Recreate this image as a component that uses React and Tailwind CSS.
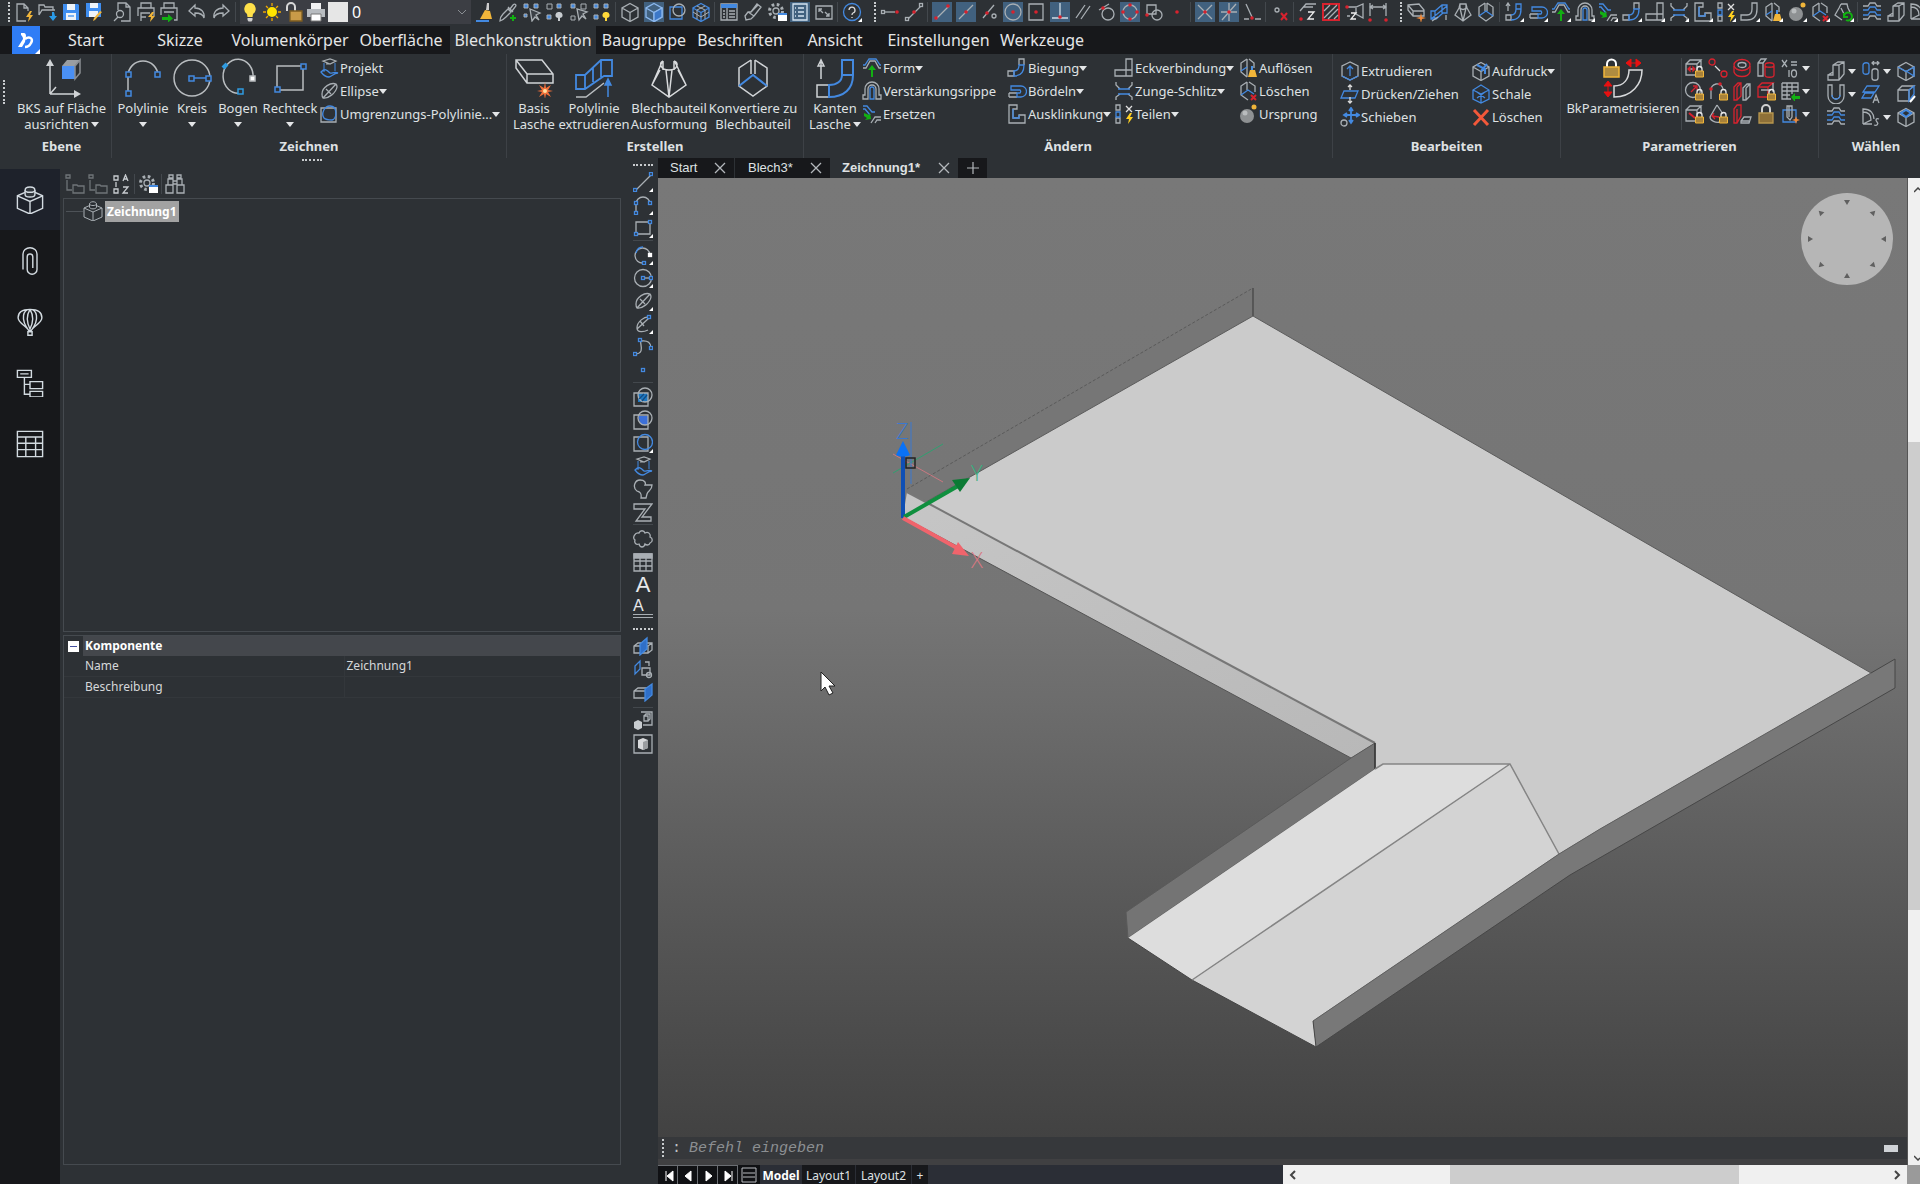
import { useState } from "react";
import clsx from "clsx";

const GREY = "#a9afb4";
const BLUE = "#4389e0";
const RED = "#d8222e";
const GOLD = "#f0b53a";
const GREEN = "#12b012";

// Short path helper, all icons are drawn on a 20x20 grid
const P = ({ d, c, f, w }) => <path d={d} stroke={c} fill={f} strokeWidth={w} />;
const Node = ({ x, y, c = BLUE, f = "#2d3135" }) => (
  <rect x={x - 1.5} y={y - 1.5} width="3" height="3" stroke={c} fill={f} />
);
const Dot = ({ x, y, r = 1.8, c = RED }) => <circle cx={x} cy={y} r={r} fill={c} stroke="none" />;
const Lock = () => (
  <>
    <P d="M13 13v-2a2.500 2.500 0 0 1 5 0v2" c="#e8e8e8" />
    <P d="M11.500 13h8v6h-8z" c={GOLD} f="#a8823a" w={1} />
  </>
);

const CUBE = "M10 1.500 18 6v9l-8 4.500L2 15V6zM2 6l8 4.500L18 6M10 10.500v9";

const icons = {
  new: (
    <>
      <P d="M14 9V6l-4-4H3v17h9M10 2v4h4" />
      <P d="m16 9-4 6h3l-1 5 5-7h-3l2-4z" f={GOLD} c="none" />
    </>
  ),
  open: (
    <>
      <P d="M2 13V3h5l1 2h8v3M2 13 5 8h13" />
      <P d="M15 10v4h-3l4 5 4-5h-2l-1-4z" f="#2a9be8" c="none" />
    </>
  ),
  save: (
    <>
      <P d="M2 2h15l1 1v15H2z" f="#3f8ef0" c="none" />
      <P d="M6 2h8v6H6zM5 11h10v7H5z" f="#eef3f8" c="none" />
      <P d="M7 14h6" c="#3f8ef0" />
    </>
  ),
  saveAs: (
    <>
      <P d="M2 1h15v14H2z" f="#3f8ef0" c="none" />
      <P d="M6 1h8v5H6zM5 9h9v6H5z" f="#eef3f8" c="none" />
      <P d="m18 10-7 8-2 1 1-3 6-7z" f={GOLD} c="none" />
    </>
  ),
  preview: (
    <>
      <P d="M6 8V1h8l4 4v14H9M14 1v4h4" />
      <circle cx="8" cy="12" r="3.500" />
      <P d="m6 15-4 4" />
    </>
  ),
  print: (
    <>
      <P d="M5 6V1h10v5M2 14V6h16v8M5 19v-8h9M5 15h5" />
      <P d="m16 10-4 5h3l-1 5 5-6h-3l2-4z" f={GOLD} c="none" />
    </>
  ),
  publish: (
    <>
      <P d="M5 6V1h10v5M2 13V6h16v12h-3M5 10h10" />
      <P d="M3 15h6v-3l5 4.500-5 4V18H3z" f={GREEN} c="none" />
    </>
  ),
  undo: <P d="m8 3-6 6 6 5v-3c5 0 8 1 9 5 1-6-3-10-9-10z" />,
  redo: <P d="m12 3 6 6-6 5v-3c-5 0-8 1-9 5C2 10 6 6 12 6z" />,
  bulb: (
    <>
      <P d="M10 1a6 6 0 0 0-3 11l.5 3h5l.5-3a6 6 0 0 0-3-11z" f="#ffe04a" c="none" />
      <P d="M7.500 16h5v2l-1 1.500h-3l-1-1.500z" f="#d0d0d0" c="none" />
    </>
  ),
  sun: (
    <>
      <circle cx="10" cy="10" r="5" fill="#ffe400" stroke="none" />
      <P d="M10 1v3M10 16v3M1 10h3M16 10h3M4 4l2 2M14 14l2 2M4 16l2-2M14 6l2-2" c="#f0a800" />
    </>
  ),
  unlock: (
    <>
      <P d="M3 9V5a4 4 0 0 1 8 0v5" c="#d8d8d8" w={2} />
      <P d="M6 9h12v10H6z" f="#c89a48" c="#7c5c20" />
    </>
  ),
  printer: (
    <>
      <P d="M5 1h10v6H5z" f="#f2f2f2" c="none" />
      <P d="M1 7h18v8H1z" f="#b8bcc0" c="none" />
      <P d="M5 12h10v7H5z" f="#fff" c="#777" w={1} />
    </>
  ),
  brush: (
    <>
      <P d="M12 1h2v7h-3z" f="#ccc" c="none" />
      <P d="m10 8 5 1 2 8H5z" f={GOLD} c="none" />
      <P d="M1 19h13" c={BLUE} w={2} />
    </>
  ),
  dropper: (
    <>
      <P d="M2 19c0-4 1-5 3-7l5-5 3 3-5 5c-2 2-3 3-6 4zM10 5l5 5M12 7l3-4c2-2 4 0 2 2l-3 4" />
      <P d="M15 13v6M12 16h6" c={GREEN} w={2} />
    </>
  ),
  grid1: (
    <>
      <P d="M2 2h4v4H2zM12 2h4v4h-4zM2 12h3v3H2z" f={BLUE} c={GREY} w={1} />
      <P d="m8 7 2 12 3-4 4 3-3-5 4-2z" f="#3b4046" />
    </>
  ),
  grid2: (
    <>
      <P d="M2 2h5v5H2z" w={1} />
      <P d="M12 2h4v4h-4zM2 13h4v4H2z" f={BLUE} c={GREY} w={1} />
      <P d="M14 10a3 3 0 0 0-1 6v3h2v-3a3 3 0 0 0-1-6z" f="#c8ccd0" c="none" />
    </>
  ),
  grid3: (
    <>
      <P d="M2 2h4v4H2z" f={BLUE} c={GREY} w={1} />
      <P d="M12 2h5v5h-5zM2 14h4v4H2z" w={1} />
      <P d="m8 7 2 11 3-4 4 3-3-5 4-2z" f="#3b4046" />
    </>
  ),
  grid4: (
    <>
      <P d="M2 2h4v4H2zM12 2h4v4h-4zM2 13h4v4H2z" f={BLUE} c={GREY} w={1} />
      <P d="M14 10a3 3 0 0 0-1 6v3h2v-3a3 3 0 0 0-1-6z" f="#ffd83a" c="none" />
    </>
  ),
  cube: <P d={CUBE} />,
  cubeBlue: (
    <>
      <P d={CUBE} c="#8cb8ee" />
      <P d="m10 10.500 8-4.500v9l-8 4.500z" f="#3c78c8" c="#8cb8ee" />
    </>
  ),
  cubeLines: (
    <>
      <P d={CUBE} c={BLUE} />
      <P d="m6 4 8 4v9M14 4 6 8v9M2 10l8 5 8-5" w={1} />
    </>
  ),
  boxes: (
    <>
      <P d="M3 5h12v12H3z" c={BLUE} />
      <circle cx="12" cy="8" r="6" />
    </>
  ),
  tableDoc: (
    <>
      <P d="M2 2h16v16H2zM8 6v12M10 9h6M10 12h6M10 15h6M4 9h2M4 12h2M4 15h2" />
      <P d="M2 2h16v4H2z" f={BLUE} c="none" />
    </>
  ),
  eraser: <P d="m2 14 3-4h3l6-8 4 3-7 9-3 3-5 1zM5 10l6 4M8 10l7-7" />,
  gear: (
    <>
      <circle cx="9" cy="9" r="3" />
      <circle cx="9" cy="9" r="6.500" strokeWidth="3" strokeDasharray="2.600 2.500" />
      <P d="M11 11h9v8h-9z" f="#fff" c="none" />
      <P d="M11 11h9v2h-9z" f={BLUE} c="none" />
    </>
  ),
  list: <P d="M3 2h14v16H3zM8 6h6M8 10h6M8 14h6M5 6h1M5 10h1M5 14h1" c="#d4e4f2" />,
  screen: <P d="M2 4h16v13H2zM5 10V7h3M5 7l4 4M15 11v3h-3M15 14l-4-4" />,
  help: (
    <>
      <circle cx="10" cy="10" r="8.500" stroke={BLUE} />
      <P d="M7 8a3 3 0 1 1 4 3c-1 .5-1 1-1 2M10 15v1" c="#dcdcdc" />
    </>
  ),
  snapEnd: (
    <>
      <P d="M4 10h11" />
      <Node x={3} y={10} c={GREY} />
      <Dot x={17} y={10} />
    </>
  ),
  snapLine: (
    <>
      <P d="M4 17 17 4" />
      <Node x={3} y={17} c={GREY} />
      <Node x={17} y={3} c={GREY} />
      <Dot x={10} y={10} />
    </>
  ),
  snapRed: (
    <>
      <P d="M4 17 17 4" />
      <Dot x={4} y={16} />
      <Dot x={16} y={4} />
    </>
  ),
  snapMid: (
    <>
      <P d="M3 17 17 3" />
      <Dot x={10} y={10} />
    </>
  ),
  snapNear: (
    <>
      <P d="M4 16 15 3" />
      <circle cx="15" cy="14" r="2" />
      <Dot x={8} y={11} />
    </>
  ),
  snapCenter: (
    <>
      <circle cx="10" cy="10" r="8" />
      <Dot x={10} y={10} />
    </>
  ),
  snapGeo: (
    <>
      <P d="M3 2h14v16H3z" />
      <Dot x={10} y={10} />
    </>
  ),
  snapPerp: (
    <>
      <P d="M10 1v14M2 16h16" c="#d0dce6" />
      <Dot x={10} y={15} />
    </>
  ),
  snapPar: <P d="M3 16 12 3M8 17l9-13" />,
  snapTan: (
    <>
      <circle cx="11" cy="12" r="6" />
      <P d="M2 8 12 2" />
      <Dot x={6} y={6} />
    </>
  ),
  snapQuad: (
    <>
      <circle cx="10" cy="10" r="7" />
      <Dot x={10} y={3} />
      <Dot x={10} y={17} />
      <Dot x={3} y={10} />
      <Dot x={17} y={10} />
    </>
  ),
  snapIns: (
    <>
      <P d="M3 3h9v9H3z" />
      <circle cx="13" cy="13" r="5" />
      <Dot x={3} y={13} />
    </>
  ),
  snapPoint: <Dot x={10} y={10} />,
  snapInt: (
    <>
      <P d="m3 3 14 14M17 3 3 17" />
      <Dot x={10} y={10} />
    </>
  ),
  snapInt2: (
    <>
      <P d="M10 1v18M17 2 3 18M2 10h16" />
      <Dot x={10} y={10} />
    </>
  ),
  snapExt: (
    <>
      <P d="m4 2 6 13" />
      <P d="M2 17h5M13 17h6" />
      <Dot x={10} y={16} />
    </>
  ),
  snapOff: (
    <>
      <circle cx="7" cy="8" r="2" />
      <P d="m11 11 6 7M17 11l-6 7" c={RED} w={2} />
    </>
  ),
  zLow: (
    <>
      <P d="m2 9 6-7h10M5 5h10" />
      <P d="M10 10h6l-6 7h6" c="#eee" />
      <Dot x={3} y={17} />
    </>
  ),
  hatchRed: (
    <>
      <P d="M2 2h16v16H2z" c={RED} w={2} />
      <P d="M3 9l6-6M3 16 16 3M7 17 17 7M13 17l4-4" />
    </>
  ),
  zNeg: (
    <>
      <P d="M2 5h9l7-3v14l-7-4V6M2 14h3" />
      <P d="M6 11h5l-5 6h5" c="#eee" />
      <Dot x={2} y={5} />
    </>
  ),
  dim: (
    <>
      <P d="M2 1v13M18 1v13M2 5h16M5 3 2 5l3 2M15 3l3 2-3 2" />
      <Dot x={2} y={18} />
      <Dot x={18} y={18} />
    </>
  ),
  base: (
    <>
      <P d="m2 3 11-1 5 6v6H7L2 8zM2 3l5 6h11M7 9v5" />
      <P d="m15 11 1 4 4 1-4 1-1 4-1-4-4-1 4-1z" f="#f08a3a" c="none" />
    </>
  ),
  extrude: (
    <>
      <P d="M2 9h4l7-6h5v8h-4l-7 6H2zM6 9v8M13 3v8M2 17 18 4" c={BLUE} />
      <P d="M3 19 9 15M17 18v-5" />
    </>
  ),
  lofted: <P d="M7 2h6l1 4 4 7-8 6-8-6 4-7zM7 2v4c2 2 4 2 6 0V2M7 6l3 13 3-13" />,
  convert: (
    <>
      <P d="M9 1 3 5v9l7 5 7-5V5l-6-4M9 1v8M11 1v8" />
      <P d="m3 14 7-5 7 5" c={BLUE} />
    </>
  ),
  flange: (
    <>
      <P d="M2 13h5v5H2zM4 9V2M2 4l2-3 2 3" />
      <P d="M12 2h5v5H12zM7 18c7 0 10-4 10-11M7 13c4 0 5-2 5-6" c={BLUE} />
    </>
  ),
  hem: (
    <>
      <P d="M2 16h8M2 12h8M2 12v4" />
      <P d="M4 5h10a5 5 0 0 1 0 11h-4v-4h3a2 2 0 0 0 0-3H4z" c={BLUE} />
    </>
  ),
  form: (
    <>
      <P d="M1 10h3l4-7h5l4 7h2" />
      <P d="M1 7h2l4-6h7l4 6h1" c={BLUE} />
      <P d="m10 7 4 5h-3v7H9v-7H6z" f={GREEN} c="none" />
    </>
  ),
  rib: (
    <>
      <P d="M1 18V14h2V8a7 7 0 0 1 14 0v6h2v4h-5V8a4 4 0 0 0-8 0v10z" />
      <P d="M8 18V8a2 2 0 0 1 4 0v10z" c={BLUE} />
    </>
  ),
  replace: (
    <>
      <P d="M1 2h4l5 6h3M1 5h2l5 6" c={BLUE} />
      <P d="M19 13h-6l-4 6M19 16h-4l-2 3" />
      <P d="m2 9 5 2 1-2 1 6-6 1 2-2-3-2z" f={GREEN} c="none" />
    </>
  ),
  bend: (
    <>
      <P d="M12 7V1h5v6M7 18H1v-5h6z" />
      <P d="M12 7h5c0 7-3 11-10 11v-5c4 0 5-3 5-6z" c={BLUE} />
    </>
  ),
  corner: <P d="M12 12V1h6v17H1v-6zM12 12v6M12 12h6" />,
  slot: (
    <>
      <P d="M2 1v3l4 4M18 1v3l-4 4M2 19v-3l4-3M18 19v-3l-4-3" />
      <P d="M4 8h12M4 13h12" c={BLUE} />
    </>
  ),
  notch: (
    <>
      <P d="M2 1h8v4H6v9h6v-3h6v8H2z" />
      <P d="M6 5v9h6v-3" c={BLUE} />
    </>
  ),
  split: (
    <>
      <P d="M2 1h4v5H2zM2 14h4v5H2z" />
      <P d="M2 8h4v5H2z" c={BLUE} />
      <P d="m12 2 6 6M18 2l-6 6" c="#e0e0e0" />
      <P d="m16 9-4 6h3l-1 5 5-7h-3l2-4z" f="#ffd020" c="none" />
    </>
  ),
  bendPlain: <P d="M12 7V1h5v6c0 7-3 11-10 11H1v-5h6c4 0 5-3 5-6z" />,
  dissolve: (
    <>
      <P d="M9 1 3 5v9l6 5M9 1v18M11 1l5 4v5" />
      <P d="m3 13 6-4" c={BLUE} />
      <P d="M13 8h2v4h-2z" f="#4a90e0" c="none" />
      <P d="m12 12 5 0 2 7h-9z" f={GOLD} c="none" />
    </>
  ),
  remove: (
    <>
      <P d="M9 1 3 5v9l7 5M11 1l6 4v6M9 1v8" />
      <P d="m3 14 7-5 6 4" c={BLUE} />
      <P d="m13 14 5 5M18 14l-5 5" c={RED} w={2} />
    </>
  ),
  origin: (
    <>
      <circle cx="9" cy="12" r="7" fill="#8e9193" stroke="none" />
      <circle cx="7" cy="9" r="2.500" fill="#b9bcbe" stroke="none" />
      <circle cx="16" cy="3" r="2.500" fill={GOLD} stroke="none" />
    </>
  ),
  refresh: (
    <>
      <P d="M7 2h6l1 4 2 4M7 2 5 6l-4 7 7 5M7 6l3 6" />
      <P d="M10 14a4 4 0 1 1 2 4M10 11v4h4" c={GREEN} w={2} />
    </>
  ),
  press: (
    <>
      <P d="M1 4h5l2-3h5l2 3h4M1 17h5l2-3h5l2 3h4" />
      <P d="M1 8h5l2-3h5l2 3h4M1 13h5l2-3h5l2 3h4" c={BLUE} />
    </>
  ),
  step: <P d="M2 14h5V4l5-3h6v12l-5 6H2zM7 4h6v15M13 4l5-3M2 14l5-3" />,
  project: (
    <>
      <P d="m4 3 7-2 6 2-6 3zM7 6h3" w={1.200} />
      <P d="M5 5v9M16 5v8" c={BLUE} w={1} />
      <P d="M2 14c3 4 5 5 8 5 2 0 5-4 9-4-4-2-6 1-8 0-3-3-5-5-9-1z" c={BLUE} />
    </>
  ),
  ellipse: (
    <>
      <P d="M17 3C12 1 3 6 3 13c0 2 0 3 1 4 5 1 13-5 14-11 0-1 0-2-1-3zM4 17 17 3M7 8l5 5" />
    </>
  ),
  ellArc: (
    <>
      <P d="M17 3C11 2 4 8 4 14c0 5 7 4 11 2M4 15 16 4M7 7l4 5" />
      <Node x={16} y={3} />
    </>
  ),
  boundary: (
    <>
      <P d="M2 4h15v14H2z" />
      <P d="M5 14c-3-4 0-12 6-12 8 0 7 13 2 14-3 0-6 0-8-2z" c={BLUE} />
    </>
  ),
  extrudeBox: (
    <>
      <P d="M10 1 2 5v10l8 4 8-4V5z" />
      <P d="M2 15l8 4 8-4M10 15V6M7 8l3-3 3 3" c={BLUE} />
    </>
  ),
  pushPull: (
    <>
      <P d="M4 7h14l-3 7H1z" c={BLUE} />
      <P d="M10 1v5M10 13v6M8 3l2-2 2 2M8 17l2 2 2-2" c="#ddd" />
    </>
  ),
  move: (
    <>
      <P d="M11 2v13M5 8h13M9 4l2-3 2 3M9 13l2 3 2-3M7 6 4 8l3 2M16 6l3 2-3 2" c={BLUE} w={1.800} />
      <circle cx="4" cy="16" r="3" />
    </>
  ),
  imprint: (
    <>
      <P d={CUBE} />
      <P d="m6 4 8 4v5M10 10l6-7" c={BLUE} w={2} />
    </>
  ),
  shell: <P d="M10 1 18 6v9l-8 4-8-4V6zM2 6l8 4 8-4M10 10v9M6 8l8 6M14 8l-8 6" c={BLUE} />,
  cross: <P d="m3 3 14 15M17 3 3 18" c="#f2583a" w={3} />,
  lockBox: (
    <>
      <P d="M2 6h11v11H2zM2 6l4-4h11l-4 4M17 2v8M4 11h7" />
      <P d="m4 11 2-2v4zM11 11 9 9v4z" f={RED} c={RED} />
      <Lock />
    </>
  ),
  lockRadius: (
    <>
      <circle cx="9" cy="9" r="7.500" />
      <P d="m7 11 5-5M9 5h4v4" c={RED} />
      <Lock />
    </>
  ),
  lockBox2: (
    <>
      <P d="M2 6h11v11H2zM2 6l4-4h11l-4 4M17 2v8" />
      <P d="m5 9 6 5" c={RED} w={2} />
      <Lock />
    </>
  ),
  coincident: (
    <>
      <circle cx="4" cy="4" r="3" stroke={RED} />
      <circle cx="16" cy="16" r="3" stroke={RED} />
      <P d="m7 8 5 5" c="#ddd" />
    </>
  ),
  lockArc: (
    <>
      <P d="M3 18V10a6 6 0 0 1 12-2" />
      <Dot x={3} y={8} />
      <Dot x={12} y={3} />
      <Lock />
    </>
  ),
  lockCone: (
    <>
      <P d="M9 1 2 13c0 4 6 6 10 5M9 1l6 9" />
      <P d="m4 12 7 1M6 9l-2 3 3 3" c={RED} />
      <Lock />
    </>
  ),
  torus: (
    <>
      <ellipse cx="10" cy="7" rx="8" ry="5.500" stroke={RED} />
      <ellipse cx="10" cy="7" rx="4" ry="2.500" />
      <P d="M2 8v6c2 6 14 6 16 0V8" c={RED} />
    </>
  ),
  parallelRed: (
    <>
      <P d="M2 6l4-4h3v13l-4 4H2zM5 6l4-4M5 6v13" c={RED} />
      <P d="M11 7l4-4h3v12l-4 4h-3zM14 7l4-4M14 7v12" />
    </>
  ),
  perpRed: (
    <>
      <P d="M2 5l3-4h4v11l-4 7H2zM5 5v14" c={RED} />
      <P d="m9 17 3-4h7l-2 6H9zM9 17h8" />
    </>
  ),
  cylinder: (
    <>
      <P d="M2 18V5l3-4h5L7 5v13zM2 5h5" />
      <P d="M9 7c0-3 9-3 9 0v10c0 3-9 3-9 0zM9 7c0 3 9 3 9 0" c={RED} />
    </>
  ),
  lockFace: (
    <>
      <P d="M2 6h10v10H2zM2 6l4-4h11l-5 4" c={RED} />
      <P d="M5 9h10M17 2v9" />
      <Lock />
    </>
  ),
  lockBig: (
    <>
      <P d="M6 9V5a4 4 0 0 1 8 0v4" c="#d0d0d0" w={2} />
      <P d="M3 9h14v10H3z" c="#b8964e" f="#8e7038" />
    </>
  ),
  params: (
    <>
      <P d="m2 2 5 7M7 2 2 9M11 4h6M11 7h6M9 12v7" />
      <ellipse cx="14" cy="15.500" rx="2.500" ry="3.500" />
    </>
  ),
  tableArrow: (
    <>
      <P d="M2 2h16v9M2 2v16h9M2 6h16M2 10h16M2 14h8M7 2v16M12 2v11" />
      <P d="m11 16 4-4v3h5v3h-5v3z" f={GREEN} c="none" />
    </>
  ),
  array: (
    <>
      <P d="M3 6h13v12H3z" c={BLUE} />
      <P d="M7 2h5v11l-2 3-3-3zM9 2v11" />
      <P d="m16 12 1 3 3 1-3 1-1 3-1-3-3-1 3-1z" f="#f08a3a" c="none" />
    </>
  ),
  cylinders: (
    <>
      <P d="M2 4c0-3 6-3 6 0v7c0 3-6 3-6 0z" c={BLUE} />
      <P d="M11 10c0-3 6-3 6 0v7c0 3-6 3-6 0zM11 2h7M13 0l-2 2 2 2M16 0l2 2-2 2" />
    </>
  ),
  cubeSel: (
    <>
      <P d={CUBE} />
      <P d="m2 6 8 4.500 8-4.500v9L10 10" c={BLUE} />
    </>
  ),
  uShape: (
    <>
      <P d="M2 1h4v10a4 4 0 0 0 8 0V1h4v11a7 7 0 0 1-16 0z" />
      <P d="M6 11a4 4 0 0 0 8 0" c={BLUE} />
    </>
  ),
  planeA: (
    <>
      <P d="M6 2h12l-4 6H2zM4 9h9l-3 5H1z" c={BLUE} />
      <P d="m12 19 3-8 3 8M13 16h4" />
    </>
  ),
  boxArrow: (
    <>
      <P d="M2 6h11v11H2zM2 6l4-4h12l-5 4" />
      <P d="M18 2v8l-5 7V6z" c={BLUE} />
      <P d="m14 18 5-6" c="#fff" w={2} />
    </>
  ),
  quarter: (
    <>
      <P d="M2 17V2c8 0 11 5 11 10M2 17h9M2 5c5 0 8 3 8 8l-8 4" />
      <P d="M18 12c-3-1-4 1-2 3s0 4-3 3" />
    </>
  ),
  cubeTop: (
    <>
      <P d={CUBE} />
      <P d="m5 6 5-3 5 3-5 4z" c={BLUE} w={2} />
    </>
  ),
  line: (
    <>
      <P d="M3 18 18 3" />
      <Node x={2} y={18} />
      <Node x={18} y={2} />
    </>
  ),
  polyline: (
    <>
      <P d="M3 18V9a7 7 0 0 1 14 0" />
      <Node x={3} y={18} />
      <Node x={3} y={8} />
      <Node x={17} y={8} />
    </>
  ),
  rect: (
    <>
      <P d="M3 4h14v12H3z" />
      <Node x={3} y={16} />
      <Node x={17} y={4} />
    </>
  ),
  arc: (
    <>
      <P d="M17 10A7.500 7.500 0 1 0 10 18" />
      <P d="M3 8c1-4 4-6 7-6" c={BLUE} />
      <Node x={17} y={10} c="#fff" f="#fff" />
      <Node x={11} y={18} />
    </>
  ),
  circle: (
    <>
      <circle cx="10" cy="10" r="8.500" />
      <P d="M10 10h8" />
      <Node x={10} y={10} />
      <Node x={18} y={10} />
    </>
  ),
  spline: (
    <>
      <P d="M2 17c11 0 4-12 6-13 7-1 10 2 10 7" />
      <Node x={2} y={17} />
      <Node x={7} y={3} />
      <Node x={18} y={11} />
    </>
  ),
  point: <Node x={10} y={10} />,
  hatch: (
    <>
      <P d="M5 6h10v9H5z" f="#1f78c0" c="none" />
      <P d="M1 6h14v13H1z" />
      <circle cx="12" cy="8" r="7" />
      <P d="m6 12 5-5M9 14l5-6" c="#124a80" />
    </>
  ),
  gradient: (
    <>
      <P d="M5 6h10v9H8z" f="#3c70d8" c="none" />
      <P d="M1 5h14v14H1z" />
      <circle cx="12" cy="8" r="7" />
    </>
  ),
  region: (
    <>
      <P d="M1 4h14v14H1z" />
      <circle cx="12" cy="9" r="7.500" stroke={BLUE} />
    </>
  ),
  blob: <P d="M7 1c5 0 6 3 5 5h7c0 6-4 5-5 9l-1 4H8c1-6-2-6-4-7-5-4-2-11 3-11z" />,
  zShape: <P d="M1 2h18L9 15h9v4H3L12 7H1z" />,
  cloud: <P d="M6 4c1-3 5-3 6 0 3-2 6 1 5 4 3 1 3 5 0 6-1 3-4 2-5 1-1 4-5 4-6 0-3 1-5-1-4-4-3-2 0-8 4-7z" />,
  table: (
    <>
      <P d="M1 2h18v17H1zM1 9h18M1 14h18M7 5v14M13 5v14" />
      <P d="M1 2h18v4H1z" f={GREY} />
    </>
  ),
  section: (
    <>
      <P d="M1 10l4-3h14v7l-4 3H1zM1 10h14v7M15 10l4-3" />
      <P d="m7 8 7-6v11l-7 6z" f="#2f6fc8" c={BLUE} />
    </>
  ),
  sectionLive: (
    <>
      <P d="m2 7 5-5v8l-5 5z" c={BLUE} />
      <P d="M9 9h8v7H9zM12 3h4v4" />
      <circle cx="16" cy="16" r="2.500" />
    </>
  ),
  sectionEnd: (
    <>
      <P d="M1 9l4-3h13v7l-4 3H1zM1 9h13v7" />
      <P d="m12 7 7-5v11l-7 6z" f="#2f6fc8" c={BLUE} />
    </>
  ),
  viewOut: (
    <>
      <P d="M8 1h11v13H10M11 5h4v5h-4zM11 5l2-2h4v5l-2 2" />
      <P d="m5 9 4 2v6l-4 2-4-2v-6z" f="#c8ccd0" c="none" />
    </>
  ),
  viewCube: (
    <>
      <P d="M1 1h18v18H1z" />
      <P d="m10 4 5 2v8l-5 2-5-2V6z" f="#d8dadc" c="none" />
      <P d="m10 8 5-2v8l-5 2z" f="#9a9da0" c="none" />
    </>
  ),
  folderTree: <P d="M1 1h4v3H1zM2 6v10h5M8 11h4l1 1h6v7H8z" c="#6f7478" />,
  sortAz: (
    <>
      <P d="M3 2h4v4H3zM3 15h4v4H3zM5 8v5" c="#c8ccd0" />
      <P d="m12 7 2.500-6L17 7M13 5h3M12 13h5l-5 6h5" c="#c8ccd0" />
    </>
  ),
  binoculars: <P d="M4 1h4v3H4zM12 1h4v3h-4zM3 5h5v6H3zM12 5h5v6h-5zM1 11h7v8H1zM12 11h7v8h-7zM8 7h4v3H8z" />,
  part: (
    <>
      <P d="m10 3 9 4v9l-9 4-9-4V7zM1 7l9 4 9-4M10 11v9" />
      <P d="M6.500 3c0-3 7-3 7 0v3c0 2.500-7 2.500-7 0z" f="#272b30" />
      <P d="M6.500 3c0 2 7 2 7 0" />
    </>
  ),
  clip: <P d="M5 16V5a5 4.500 0 0 1 10 0v11a3.500 3.500 0 0 1-7 0V7a2 2 0 0 1 4 0v8" />,
  balloon: <P d="M10 1c-5 0-8.500 2-8.500 6S8 13 9 16h2c1-3 7.500-5 7.500-9S15 1 10 1zM9 16C3 8 5 1 10 1s7 7 1 15M10 1c-3 5-2 10 0 14 2-4 3-9 0-14M8.500 17h3v2.500h-3z" />,
  hierarchy: <P d="M1 1h10v5H1zM3 3.500h6M6 6v12h4M6 11h4M10 9h9v5h-9zM10 16h9v4h-9z" />,
  grid: <P d="M1 1h18v18H1zM1 5h18M1 9.500h18M1 14h18M7 5v14M14 5v14" />,
};

function Icon({ name, fly, className = "size-5" }) {
  return (
    <svg
      viewBox="0 0 20 20"
      className={clsx("shrink-0", className)}
      fill="none"
      stroke={GREY}
      strokeWidth="1.300"
      aria-hidden="true"
    >
      {icons[name]}
      {fly && <P d="M20 16v4h-4z" f="#fff" c="none" />}
    </svg>
  );
}

function Caret() {
  return (
    <svg viewBox="0 0 8 5" className="h-[5px] w-2 shrink-0" aria-hidden="true">
      <path d="M0 0h8L4 5z" fill="#e4e6e8" />
    </svg>
  );
}

// Drag handle made of small dots
function Grip({ vertical, className }) {
  return (
    <div
      className={clsx(
        "shrink-0 border-dotted border-[#c8cbce]",
        vertical ? "border-l-2" : "border-t-2",
        className,
      )}
    />
  );
}

function Sep({ className }) {
  return <div className={clsx("w-px shrink-0 bg-[#43484d]", className)} />;
}

const toolbarLeft = [
  { cls: "ml-1 w-[90px]", items: ["new", "open", "save", "saveAs"] },
  { cls: "ml-2 w-[67px]", items: ["preview", "print", "publish"] },
  { cls: "ml-2 w-11", items: ["undo", "redo"] },
];

const toolbarRight = [
  { cls: "ml-1 w-[137px]", items: ["brush", "dropper", "grid1", "grid2", "grid3", "grid4"] },
  { sep: true },
  { cls: "ml-1 w-[91px]", items: ["cube", "cubeBlue", "boxes", "cubeLines"], on: [1] },
  { sep: true },
  { cls: "ml-1 w-[115px]", items: ["tableDoc", "eraser", "gear", "list", "screen"], on: [3] },
  { sep: true },
  { cls: "ml-1 w-5", items: ["help"], fly: true },
  { grip: true },
  { cls: "ml-1 w-11", items: ["snapEnd", "snapLine"] },
  { sep: true },
  {
    cls: "ml-1 w-[255px]",
    items: [
      "snapRed", "snapMid", "snapNear", "snapCenter", "snapGeo", "snapPerp",
      "snapPar", "snapTan", "snapQuad", "snapIns", "snapPoint",
    ],
    on: [0, 1, 3, 5, 8],
  },
  { sep: true },
  { cls: "ml-1 w-[67px]", items: ["snapInt", "snapInt2", "snapExt"], on: [0, 1] },
  { sep: true },
  { cls: "ml-1 w-5", items: ["snapOff"] },
  { sep: true },
  { cls: "ml-1 w-[90px]", items: ["zLow", "hatchRed", "zNeg", "dim"] },
  { grip: true },
  { cls: "ml-1 w-[90px]", items: ["base", "extrude", "lofted", "convert"] },
  { sep: true },
  {
    cls: "ml-1 w-[350px]",
    items: [
      "flange", "hem", "form", "rib", "replace", "bend", "corner", "slot",
      "notch", "split", "bendPlain", "dissolve", "origin", "remove", "refresh",
    ],
    fly: true,
  },
  { sep: true },
  { cls: "ml-1 w-[67px]", items: ["press", "step", "quarter"] },
];

function ToolGroup({ group }) {
  if (group.sep) return <Sep className="ml-[3px] h-5" />;
  if (group.grip) return <Grip vertical className="ml-3 h-5" />;
  return (
    <div className={clsx("flex shrink-0 justify-between", group.cls)}>
      {group.items.map((name, i) => (
        <button
          key={name}
          type="button"
          aria-label={name}
          className={clsx(group.on?.includes(i) && "bg-[#41617f]")}
        >
          <Icon name={name} fly={group.fly} />
        </button>
      ))}
    </div>
  );
}

function QuickToolbar() {
  return (
    <div className="flex h-[26px] shrink-0 items-center overflow-hidden bg-[#2d3135] pb-0.5 pl-2">
      <Grip vertical className="h-5" />
      {toolbarLeft.map((g, i) => (
        <ToolGroup key={i} group={g} />
      ))}
      <Sep className="mx-1 h-5" />
      <div className="flex h-6 w-[231px] shrink-0 items-center gap-0.5 bg-[#3c3e44] pr-1">
        <Icon name="bulb" />
        <Icon name="sun" />
        <Icon name="unlock" />
        <Icon name="printer" />
        <div className="size-5 shrink-0 bg-[#e6e6e6]" />
        <select
          aria-label="Layer"
          className="min-w-0 flex-1 appearance-none bg-transparent pl-0.5 text-base text-white"
        >
          <option>0</option>
        </select>
        <svg viewBox="0 0 10 6" className="w-[10px]" fill="none" stroke="#8a8e93" aria-hidden="true">
          <path d="m1 1 4 4 4-4" />
        </svg>
      </div>
      {toolbarRight.map((g, i) => (
        <ToolGroup key={i} group={g} />
      ))}
    </div>
  );
}

const menus = [
  { label: "Start", cls: "w-[92px]" },
  { label: "Skizze", cls: "w-24" },
  { label: "Volumenkörper", cls: "w-[124px]" },
  { label: "Oberfläche", cls: "w-[98px]" },
  { label: "Blechkonstruktion", cls: "w-[146px]" },
  { label: "Baugruppe", cls: "w-24" },
  { label: "Beschriften", cls: "w-24" },
  { label: "Ansicht", cls: "w-[94px]" },
  { label: "Einstellungen", cls: "w-[113px]" },
  { label: "Werkzeuge", cls: "w-[94px]" },
];

function MenuBar() {
  const [active, setActive] = useState("Blechkonstruktion");
  return (
    <div className="flex h-7 shrink-0 bg-[#17181b] pl-3">
      <svg viewBox="0 0 28 28" className="size-7 shrink-0 bg-[#2f7df6]" role="img" aria-label="BricsCAD">
        <path d="M9 7h3c1 0 2 1 2 3l-1 6-3 5H6l5-8c0-2-1-3-2-4z" fill="#fff" />
        <path d="M13 13c4-3 9-1 6 4-1 2-3 4-6 4" fill="none" stroke="#fff" strokeWidth="2.500" />
        <path d="M28 23v5h-5z" fill="#fff" />
      </svg>
      {menus.map((m) => (
        <button
          key={m.label}
          type="button"
          onClick={() => setActive(m.label)}
          className={clsx(
            "shrink-0 text-center text-base whitespace-nowrap text-[#e4e5e6]",
            m.cls,
            active === m.label && "bg-[#2d3135]",
          )}
        >
          {m.label}
        </button>
      ))}
    </div>
  );
}

// Large ribbon drawings, 40x40 grid
const big = {
  ucs: (
    <>
      <path d="M8 36V6M8 36h26M8 36l6-7" stroke="#d0d3d6" />
      <path d="m4 8 4-7 4 7zM32 32l7 4-7 4z" fill="#d0d3d6" stroke="none" />
      <path d="M20 8h13v13H20z" fill="#4a90f5" stroke="none" />
      <path d="m20 8 5-6h13l-5 6z" fill="#9a9ea2" stroke="none" />
      <path d="M33 8l5-6v13l-5 6z" stroke="#8a8e92" />
    </>
  ),
  polyline: (
    <>
      <path d="M5 36V18a15 15 0 0 1 30 0" />
      <path d="M3 33h5v5H3zM3 14h5v5H3zM32 14h5v5h-5z" stroke={BLUE} fill="#2d3135" />
    </>
  ),
  circle: (
    <>
      <circle cx="20" cy="20" r="18" />
      <path d="M20 20h17" stroke={BLUE} />
      <path d="M17 18h5v5h-5zM34 18h5v5h-5z" stroke={BLUE} fill="#2d3135" />
    </>
  ),
  arc: (
    <>
      <path d="M35 20A15 17 0 1 0 22 35" />
      <path d="M5 10 9 6" stroke="#2f9be0" strokeWidth="4" />
      <path d="M32 18h5v5h-5z" fill="#fff" />
      <path d="M20 31h5v5h-5z" stroke="#2f9be0" fill="#2d3135" />
    </>
  ),
  rect: (
    <>
      <path d="M7 8h26v24H7z" />
      <path d="M31 6h5v5h-5zM5 29h5v5H5z" stroke={BLUE} fill="#2d3135" />
    </>
  ),
  base: (
    <>
      <path d="M2 2h26l11 14v9H13L2 10zM2 2l11 14h26M13 16v9" stroke="#d0d3d6" />
      <path
        d="m31 24 1 6 5-3-3 5 5 1-5 1 3 5-5-3-1 5-1-5-5 3 3-5-5-1 5-1-3-5 5 3z"
        fill="#f2703a"
        stroke="none"
      />
      <circle cx="31" cy="33" r="2" fill="#ffe0a0" stroke="none" />
    </>
  ),
  extrude: (
    <>
      <path d="M2 17h9l16-15h11v16h-8L11 31H2zM11 17v14M19 10v14M27 2v17" stroke={BLUE} strokeWidth="1.800" />
      <path d="M2 39h10l18-14" />
      <path d="M34 39V22M31 27l3-6 3 6z" stroke={BLUE} fill={BLUE} />
    </>
  ),
  lofted: (
    <path d="M14 3c-4 2-3 9 6 9s10-7 5-9M14 3v9M25 3v9M13 4 3 27l17 12 17-12L26 4M17 12l3 27 3-27M3 27l8-15M37 27 29 12" stroke="#d8dadc" />
  ),
  convert: (
    <>
      <path d="M18 2 6 10v18l14 10 14-10V10L22 2M18 2v14M22 2v14" stroke="#d0d3d6" />
      <path d="m6 28 14-11 14 11" stroke={BLUE} strokeWidth="2" />
    </>
  ),
  flange: (
    <>
      <path d="M2 27h12v12H2zM6 21V4M3 8l3-6 3 6z" stroke="#d0d3d6" />
      <path d="M27 2h11v15c0 14-9 22-24 22V27c8 0 13-4 13-10zM27 17h11" stroke={BLUE} strokeWidth="2" />
    </>
  ),
  param: (
    <>
      <path d="M4 10V6a4 4 0 0 1 9 0v4" stroke="#fff" strokeWidth="2" />
      <path d="M1 9h15v10H1z" fill="#b08c40" stroke={GOLD} />
      <path d="M26 12h13c0 14-10 27-28 27V28c10 0 15-7 15-16z" stroke="#d8dadc" />
      <path
        d="M24 5h12M28 1l-5 4 5 4zM33 1l5 4-5 4zM5 26v10M1 28l4-5 4 5zM1 34l4 5 4-5z"
        fill="#e81010"
        stroke="#e81010"
        strokeWidth="1"
      />
    </>
  ),
};

function BigButton({ icon, lines, drop, className }) {
  return (
    <button
      type="button"
      className={clsx("flex shrink-0 flex-col items-center pt-1 text-[13px] leading-4", className)}
    >
      <svg
        viewBox="0 0 40 40"
        className="mb-0.5 size-10 shrink-0"
        fill="none"
        stroke="#b9bdc0"
        strokeWidth="1.500"
        aria-hidden="true"
      >
        {big[icon]}
      </svg>
      <span className="whitespace-nowrap">{lines[0]}</span>
      <span className="flex h-4 items-center gap-0.5 whitespace-nowrap">
        {lines[1]}
        {drop && <Caret />}
      </span>
    </button>
  );
}

function SmallColumn({ items, className }) {
  return (
    <div className={clsx("flex shrink-0 flex-col gap-[3px]", className)}>
      {items.map(([icon, label, drop]) => (
        <button
          key={label}
          type="button"
          className="flex h-5 items-center text-[13px] leading-5 whitespace-nowrap"
        >
          <Icon name={icon} className="mr-px size-5" />
          {label}
          {drop && <Caret />}
        </button>
      ))}
    </div>
  );
}

function IconColumn({ items, drop = [], className }) {
  return (
    <div className={clsx("flex shrink-0 flex-col gap-[3px]", className)}>
      {items.map((name, i) => (
        <button key={name} type="button" aria-label={name} className="flex h-5 items-center gap-0.5">
          <Icon name={name} />
          {drop.includes(i) && <Caret />}
        </button>
      ))}
    </div>
  );
}

function RibbonGroup({ label, className, children }) {
  return (
    <section
      className={clsx("flex shrink-0 flex-col border-r border-[#3d4146]", className)}
      aria-label={label}
    >
      <div className="flex h-[83px]">{children}</div>
      <h2 className="text-center text-[13px] leading-[18px] font-bold">{label}</h2>
    </section>
  );
}

function Ribbon() {
  return (
    <div className="flex h-[104px] shrink-0 overflow-hidden text-[#dfe1e3]">
      <Grip vertical className="mt-[26px] ml-[3px] h-6 w-[9px]" />
      <RibbonGroup label="Ebene" className="w-[100px]">
        <BigButton icon="ucs" lines={["BKS auf Fläche", "ausrichten"]} drop className="w-full" />
      </RibbonGroup>
      <RibbonGroup label="Zeichnen" className="w-[395px]">
        <BigButton icon="polyline" lines={["Polylinie"]} drop className="ml-[5px] w-[52px]" />
        <BigButton icon="circle" lines={["Kreis"]} drop className="w-[46px]" />
        <BigButton icon="arc" lines={["Bogen"]} drop className="w-[46px]" />
        <BigButton icon="rect" lines={["Rechteck"]} drop className="w-[58px]" />
        <SmallColumn
          className="pt-1"
          items={[
            ["project", "Projekt"],
            ["ellipse", "Ellipse", true],
            ["boundary", "Umgrenzungs-Polylinie...", true],
          ]}
        />
      </RibbonGroup>
      <RibbonGroup label="Erstellen" className="w-[297px]">
        <BigButton icon="base" lines={["Basis", "Lasche"]} className="ml-1 w-[46px]" />
        <BigButton icon="extrude" lines={["Polylinie", "extrudieren"]} className="w-[74px]" />
        <BigButton icon="lofted" lines={["Blechbauteil", "Ausformung"]} className="w-[76px]" />
        <BigButton icon="convert" lines={["Konvertiere zu", "Blechbauteil"]} className="w-[92px]" />
      </RibbonGroup>
      <RibbonGroup label="Ändern" className="w-[529px]">
        <BigButton icon="flange" lines={["Kanten", "Lasche"]} drop className="ml-1 w-[54px]" />
        <SmallColumn
          className="w-[145px] pt-1"
          items={[
            ["form", "Form", true],
            ["rib", "Verstärkungsrippe"],
            ["replace", "Ersetzen"],
          ]}
        />
        <SmallColumn
          className="w-[107px] pt-1"
          items={[
            ["bend", "Biegung", true],
            ["hem", "Bördeln", true],
            ["notch", "Ausklinkung", true],
          ]}
        />
        <SmallColumn
          className="w-[124px] pt-1"
          items={[
            ["corner", "Eckverbindung", true],
            ["slot", "Zunge-Schlitz", true],
            ["split", "Teilen", true],
          ]}
        />
        <SmallColumn
          className="pt-1"
          items={[
            ["dissolve", "Auflösen"],
            ["remove", "Löschen"],
            ["origin", "Ursprung"],
          ]}
        />
      </RibbonGroup>
      <RibbonGroup label="Bearbeiten" className="w-[228px]">
        <SmallColumn
          className="ml-[7px] w-[131px] pt-[7px]"
          items={[
            ["extrudeBox", "Extrudieren"],
            ["pushPull", "Drücken/Ziehen"],
            ["move", "Schieben"],
          ]}
        />
        <SmallColumn
          className="pt-[7px]"
          items={[
            ["imprint", "Aufdruck", true],
            ["shell", "Schale"],
            ["cross", "Löschen"],
          ]}
        />
      </RibbonGroup>
      <RibbonGroup label="Parametrieren" className="w-[258px]">
        <BigButton icon="param" lines={["BkParametrisieren"]} className="w-[120px] pl-1" />
        <Sep className="mt-1 mr-[2px] h-[72px]" />
        <div className="flex gap-1 pt-1">
          <IconColumn items={["lockBox", "lockRadius", "lockBox2"]} />
          <IconColumn items={["coincident", "lockArc", "lockCone"]} />
          <IconColumn items={["torus", "parallelRed", "perpRed"]} />
          <IconColumn items={["cylinder", "lockFace", "lockBig"]} />
          <IconColumn items={["params", "tableArrow", "array"]} drop={[0, 1, 2]} />
        </div>
      </RibbonGroup>
      <RibbonGroup label="Wählen" className="w-[115px]">
        <IconColumn className="ml-[7px] w-[35px] pt-[7px]" items={["step", "uShape", "press"]} drop={[0, 1]} />
        <IconColumn className="w-[35px] pt-[7px]" items={["cylinders", "planeA", "quarter"]} drop={[0, 2]} />
        <IconColumn className="pt-[7px]" items={["cubeSel", "boxArrow", "cubeTop"]} />
      </RibbonGroup>
    </div>
  );
}

const panels = ["part", "clip", "balloon", "hierarchy", "grid"];

function SideBar() {
  return (
    <nav className="flex w-[60px] shrink-0 flex-col bg-[#17181b]">
      {panels.map((name, i) => (
        <button
          key={name}
          type="button"
          aria-label={name}
          className={clsx("flex h-[61px] items-center justify-center", i === 0 && "bg-[#1e222b]")}
        >
          <Icon name={name} className="size-7 brightness-125 [stroke-width:1]" />
        </button>
      ))}
    </nav>
  );
}

function StructurePanel() {
  return (
    <aside className="flex min-h-0 w-[563px] shrink-0 flex-col pr-0.5 pb-[19px] pl-[3px]">
      <div className="flex h-[29px] shrink-0 items-center gap-[3px] pl-0.5">
        <button type="button" aria-label="Aufklappen">
          <Icon name="folderTree" />
        </button>
        <button type="button" aria-label="Zuklappen">
          <Icon name="folderTree" />
        </button>
        <button type="button" aria-label="Sortieren">
          <Icon name="sortAz" />
        </button>
        <Sep className="h-5" />
        <button type="button" aria-label="Optionen">
          <Icon name="gear" />
        </button>
        <Sep className="h-5" />
        <button type="button" aria-label="Suchen">
          <Icon name="binoculars" />
        </button>
      </div>
      <div className="h-[434px] shrink-0 border border-[#454a4f] pt-px text-xs">
        <div className="flex h-[22px] items-center">
          <div className="ml-0.5 w-[17px] border-t border-[#4d5257]" />
          <Icon name="part" className="mr-0.5 size-5 [stroke-width:1]" />
          <span className="bg-[#a2a2a2] px-0.5 leading-[21px] font-bold text-white">Zeichnung1</span>
        </div>
      </div>
      <div className="mt-[3px] min-h-0 flex-1 border border-[#454a4f]">
        <table className="w-full table-fixed border-collapse text-left text-xs leading-5 text-[#d6d8da]">
          <colgroup>
            <col className="w-[19px]" />
            <col className="w-[261px]" />
            <col />
          </colgroup>
          <tbody>
            <tr>
              <td className="pl-1">
                <button
                  type="button"
                  aria-label="Gruppe schließen"
                  className="flex size-[11px] items-center justify-center bg-white"
                >
                  <span className="h-px w-[7px] bg-[#4450a0]" />
                </button>
              </td>
              <th colSpan={2} className="bg-[#44474c] pl-[2px] font-bold text-white">
                Komponente
              </th>
            </tr>
            <tr className="border-b border-[#33373b]">
              <td />
              <th scope="row" className="border-r border-[#33373b] pl-[2px] font-normal">
                Name
              </th>
              <td className="pl-[2px]">Zeichnung1</td>
            </tr>
            <tr className="border-b border-[#33373b]">
              <td />
              <th scope="row" className="border-r border-[#33373b] pl-[2px] font-normal">
                Beschreibung
              </th>
              <td />
            </tr>
          </tbody>
        </table>
      </div>
    </aside>
  );
}

const drawTools = [
  ["line", "polyline", "rect"],
  ["arc", "circle", "ellipse", "ellArc", "spline", "point"],
  ["hatch", "gradient", "region", "project", "blob", "zShape"],
  ["cloud", "table", "text", "mtext"],
];
const viewTools = [["section", "sectionLive", "sectionEnd"], ["viewOut", "viewCube"]];
const flyouts = ["line", "polyline", "rect", "arc", "circle", "ellipse", "ellArc", "region"];

function DrawButton({ name }) {
  return (
    <button
      type="button"
      aria-label={name}
      className="flex h-[23px] items-center justify-center font-['Liberation_Sans',sans-serif] text-[#e6e8ea]"
    >
      {name === "text" && <span className="text-[22px] leading-5">A</span>}
      {name === "mtext" && (
        <span className="w-5 border-b-4 border-double border-[#a9afb4] text-left text-base leading-4">A</span>
      )}
      {icons[name] && <Icon name={name} fly={flyouts.includes(name)} />}
    </button>
  );
}

function DrawToolbar() {
  return (
    <div className="flex w-[35px] shrink-0 flex-col items-stretch pt-[6px] pr-[5px] pl-[10px]">
      <Grip className="mb-1" />
      {drawTools.map((group, i) => (
        <div
          key={i}
          className={clsx("flex flex-col", i > 0 && "mt-px border-t border-[#43484d] pt-[2px]")}
        >
          {group.map((name) => (
            <DrawButton key={name} name={name} />
          ))}
        </div>
      ))}
      <Grip className="mt-[9px] mb-1" />
      {viewTools.map((group, i) => (
        <div key={i} className={clsx("flex flex-col", i > 0 && "mt-1 border-t border-[#43484d] pt-px")}>
          {group.map((name) => (
            <DrawButton key={name} name={name} />
          ))}
        </div>
      ))}
    </div>
  );
}

const docs = [
  { label: "Start", cls: "w-[77px] pl-3" },
  { label: "Blech3*", cls: "w-24 pl-[13px]" },
  { label: "Zeichnung1*", cls: "w-[127px] pl-[11px]", active: true },
];

function DocTabs() {
  return (
    <div className="flex h-5 shrink-0 font-['Liberation_Sans',sans-serif] text-[13px] text-[#dfe1e3]">
      {docs.map((d) => (
        <div
          key={d.label}
          className={clsx(
            "flex items-center justify-between pr-2",
            d.cls,
            d.active ? "font-bold" : "border-r border-[#2d3135] bg-[#17181b]",
          )}
        >
          <button type="button">{d.label}</button>
          <button type="button" aria-label={`${d.label} schließen`}>
            <svg viewBox="0 0 12 12" className="size-3" stroke="#b4b8bc" strokeWidth="1.300" aria-hidden="true">
              <path d="m1 1 10 10M11 1 1 11" />
            </svg>
          </button>
        </div>
      ))}
      <button
        type="button"
        aria-label="Neue Zeichnung"
        className="flex w-[29px] items-center justify-center bg-[#17181b]"
      >
        <svg viewBox="0 0 12 12" className="size-3" stroke="#b4b8bc" strokeWidth="1.200" aria-hidden="true">
          <path d="M6 0v12M0 6h12" />
        </svg>
      </button>
    </div>
  );
}

function Compass() {
  return (
    <g>
      <circle cx="1847" cy="239" r="46" fill="#b6b6b6" />
      {[0, 90, 180, 270].map((a) => (
        <path key={a} d="M1844 200h6l-3 5z" fill="#606060" transform={`rotate(${a} 1847 239)`} />
      ))}
      {[45, 135, 225, 315].map((a) => (
        <path key={a} d="M1844 204h6l-3-5z" fill="#606060" transform={`rotate(${a} 1847 239)`} />
      ))}
    </g>
  );
}

function Scene() {
  return (
    <svg
      viewBox="658 178 1249 959"
      preserveAspectRatio="xMinYMin slice"
      className="min-h-0 w-full flex-1"
      role="img"
      aria-label="3D-Modell"
    >
      <defs>
        <linearGradient id="bg" x1="0" y1="0" x2="0" y2="1">
          <stop offset="0" stopColor="#787878" />
          <stop offset="0.450" stopColor="#757575" />
          <stop offset="0.550" stopColor="#6c6c6c" />
          <stop offset="0.800" stopColor="#545454" />
          <stop offset="1" stopColor="#424242" />
        </linearGradient>
        <linearGradient id="front" x1="0" y1="0" x2="1" y2="1">
          <stop offset="0" stopColor="#c6c6c6" />
          <stop offset="1" stopColor="#b8b8b8" />
        </linearGradient>
      </defs>
      <rect x="658" y="178" width="1249" height="959" fill="url(#bg)" />

      {/* rear flange */}
      <path d="M907 489 1253 288v28L926 501l-19-9z" fill="#767676" />
      <path d="M907 489 1253 288" stroke="#5a5a5a" strokeDasharray="3 2" />
      <path d="M1253 288v28" stroke="#4c4c4c" strokeWidth="1.500" />

      {/* plate */}
      <path d="m926 502 327-186 618 357-271 156-41 25-49-90h-127l-8 5v-26z" fill="#cbcbcb" />
      <path d="m926 502 327-186 618 357" fill="none" stroke="#5c5c5c" />

      {/* front flange */}
      <path d="m907 492 468 251-24 15-448-241z" fill="url(#front)" />
      <path d="m907 492 468 251" stroke="#777" strokeWidth="2" />
      <path d="m903 517 448 241" stroke="#555" />

      {/* left side of the tongue */}
      <path d="M1375 743v26l-247 169-2-26 225-154z" fill="#747474" stroke="#5a5a5a" />
      <path d="M1375 743v26" stroke="#333" strokeWidth="1.500" />

      {/* tongue, two faces */}
      <path d="M1510 764h-127l-8 5-247 169 64 42z" fill="#dddddd" />
      <path d="m1510 764 49 90-246 167 3 26-124-67z" fill="#d3d3d3" />
      <path d="m1128 938 64 42 124 67" fill="none" stroke="#444" />
      <path d="M1375 769l8-5h127l49 90M1510 764l-318 216" fill="none" stroke="#858585" strokeWidth="1.500" />

      {/* right flange */}
      <path d="M1871 673l24-14v29l-325 187-254 172-3-26 246-167 41-25z" fill="#787878" />
      <path d="m1871 673-271 156-41 25-246 167" fill="none" stroke="#606060" />
      <path d="m1871 673 24-14v29l-325 187-254 172-3-26" fill="none" stroke="#474747" />

      {/* UCS axes and crosshair */}
      <g strokeWidth="1">
        <path d="m893 454 50 28" stroke="#c87880" />
        <path d="m893 473 50-29" stroke="#30a070" />
        <path d="M911 422v62" stroke="#3a78d0" />
        <path d="M906 458h9v10h-9z" fill="none" stroke="#222" strokeWidth="1.500" />
      </g>
      <g fontSize="22" fontWeight="300" className="font-['Open_Sans',sans-serif]">
        <text x="896" y="439" fill="#3a78d0">Z</text>
        <text x="971" y="481" fill="#38b080">Y</text>
        <text x="971" y="568" fill="#d87882">X</text>
      </g>
      <path d="M903 518v-66" stroke="#0f4fb4" strokeWidth="4" />
      <path d="m903 441 7 14c-4 2-10 2-14 0z" fill="#0a72f5" />
      <path d="m904 517 54-31" stroke="#0f8f3e" strokeWidth="4" />
      <path d="m970 478-18 2 8 12z" fill="#0b7a34" />
      <path d="m903 518 54 30" stroke="#f0646c" strokeWidth="4" />
      <path d="m969 556-11-14-6 12z" fill="#f0646c" />

      <Compass />
      <path d="M821 672v19l4-4 4 8 4-2-4-7h6z" fill="#fff" stroke="#222" />
    </svg>
  );
}

function CommandLine() {
  return (
    <div className="shrink-0 border-b-[6px] border-[#404042] bg-[#36383b]">
      <label className="flex h-[22px] items-center gap-2 pr-[9px] pl-1 font-['Liberation_Mono',monospace] text-[15px] text-[#c0c3c6]">
        <Grip vertical className="h-[18px]" />
        <span className="pt-0.5">:</span>
        <input
          aria-label="Befehl"
          placeholder="Befehl eingeben"
          className="h-[22px] min-w-0 flex-1 bg-transparent pt-[3px] italic outline-none placeholder:text-[#8c8f92]"
        />
        <span className="h-[7px] w-[14px] bg-[#cfd2d6]" />
      </label>
    </div>
  );
}

const navPaths = ["M5 2v10M12 2v10L6 7z", "M10 2v10L4 7z", "M5 2v10l6-5z", "M11 2v10M4 2v10l6-5z"];
const navNames = ["Erstes", "Vorheriges", "Nächstes", "Letztes"];

function LayoutBar() {
  return (
    <div className="flex h-[19px] shrink-0 bg-[#2b2e36] text-xs leading-[21px] text-[#dfe1e3]">
      {navPaths.map((d, i) => (
        <button
          key={d}
          type="button"
          aria-label={`${navNames[i]} Layout`}
          className="flex w-5 items-center justify-center border-t border-r border-[#6a6d72] bg-[#101114] pt-px"
        >
          <svg viewBox="0 0 14 14" className="size-[14px]" fill="#fff" stroke="#fff" aria-hidden="true">
            <path d={d} />
          </svg>
        </button>
      ))}
      <button
        type="button"
        aria-label="Layoutliste"
        className="flex w-[22px] items-center justify-center bg-[#101114]"
      >
        <svg viewBox="0 0 16 16" className="size-4" fill="none" stroke="#b8bbbf" aria-hidden="true">
          <path d="M1 1h14v14H1zM2 6h12M2 10h12" />
        </svg>
      </button>
      <button type="button" className="w-[42px] text-center font-bold text-white">
        Model
      </button>
      <button type="button" className="w-[54px] border-r border-[#2b2e36] bg-[#17181b]">
        Layout1
      </button>
      <button type="button" className="w-[56px] border-r border-[#2b2e36] bg-[#17181b]">
        Layout2
      </button>
      <button type="button" className="w-4 bg-[#17181b]" aria-label="Neues Layout">
        +
      </button>
      <div className="ml-auto flex w-1/2 items-center justify-between bg-[#f0f0f0] px-[6px]">
        <Chevron d="M6 1 2 5l4 4" />
        <div className="h-full w-[289px] bg-[#cdcdcd]" />
        <Chevron d="m2 1 4 4-4 4" />
      </div>
    </div>
  );
}

function Chevron({ d }) {
  return (
    <svg viewBox="0 0 8 10" className="h-[10px] w-2 shrink-0" fill="none" stroke="#444" strokeWidth="2" aria-hidden="true">
      <path d={d} />
    </svg>
  );
}

// Only the left part of the bar is inside the window
function VerticalScroll() {
  return (
    <div className="flex w-[13px] shrink-0 flex-col overflow-hidden pt-5">
      <div className="flex min-h-0 flex-1 flex-col border-l border-[#555] bg-[#f0f0f0]">
        <div className="flex h-6 items-center justify-end">
          <svg viewBox="0 0 6 6" className="size-[6px]" fill="none" stroke="#444" strokeWidth="1.500" aria-hidden="true">
            <path d="m0 5 4-4 2 2" />
          </svg>
        </div>
        <div className="basis-60" />
        <div className="h-[468px] bg-[#cdcdcd]" />
        <div className="flex flex-1 items-end justify-end pb-1">
          <svg viewBox="0 0 6 6" className="size-[6px]" fill="none" stroke="#444" strokeWidth="1.500" aria-hidden="true">
            <path d="m0 1 4 4 2-2" />
          </svg>
        </div>
      </div>
      <div className="h-[19px] bg-[#9a9a9a]" />
    </div>
  );
}

export default function App() {
  return (
    <div className="flex h-screen flex-col overflow-hidden bg-[#2d3135] font-['Noto_Sans',sans-serif]">
      <QuickToolbar />
      <MenuBar />
      <Ribbon />
      <div className="flex min-h-0 flex-1">
        <div className="flex shrink-0 flex-col">
          <div className="flex h-[11px] shrink-0 justify-center pt-px">
            <Grip className="w-5" />
          </div>
          <div className="flex min-h-0 flex-1">
            <SideBar />
            <StructurePanel />
          </div>
        </div>
        <DrawToolbar />
        <main className="flex min-w-0 flex-1 flex-col">
          <DocTabs />
          <Scene />
          <CommandLine />
          <LayoutBar />
        </main>
        <VerticalScroll />
      </div>
    </div>
  );
}
